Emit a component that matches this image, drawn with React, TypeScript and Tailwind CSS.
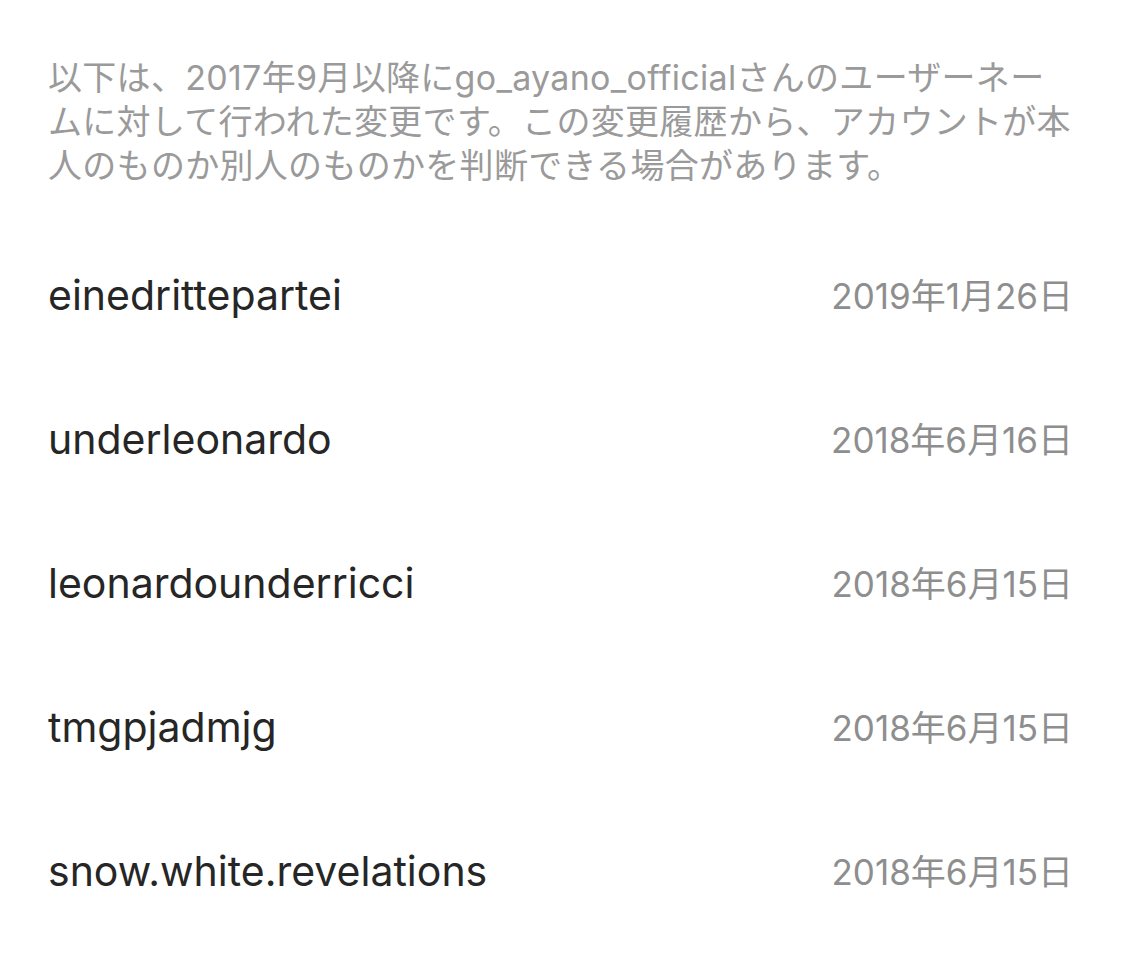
const history = [
  { name: 'einedrittepartei', date: '2019年1月26日' },
  { name: 'underleonardo', date: '2018年6月16日' },
  { name: 'leonardounderricci', date: '2018年6月15日' },
  { name: 'tmgpjadmjg', date: '2018年6月15日' },
  { name: 'snow.white.revelations', date: '2018年6月15日' },
];

export default function App() {
  return (
    <div
      className="min-h-screen bg-white pl-[48px] pr-[52px] pt-[56px]"
      style={{ fontFamily: 'Inter, "Noto Sans CJK JP", sans-serif' }}
    >
      <p className="text-[34px] leading-[44px] text-[#9a9a9a] tracking-[0.3px] whitespace-nowrap">
        以下は、2017年9月以降にgo_ayano_officialさんのユーザーネー
        <br />
        ムに対して行われた変更です。この変更履歴から、アカウントが本
        <br />
        人のものか別人のものかを判断できる場合があります。
      </p>
      <div className="mt-[36px]">
        {history.map((h) => (
          <div key={h.name + h.date} className="flex items-center justify-between h-[144px]">
            <span className="text-[41px] text-[#262626]">{h.name}</span>
            <span className="text-[35px] text-[#8e8e8e]">{h.date}</span>
          </div>
        ))}
      </div>
    </div>
  );
}
